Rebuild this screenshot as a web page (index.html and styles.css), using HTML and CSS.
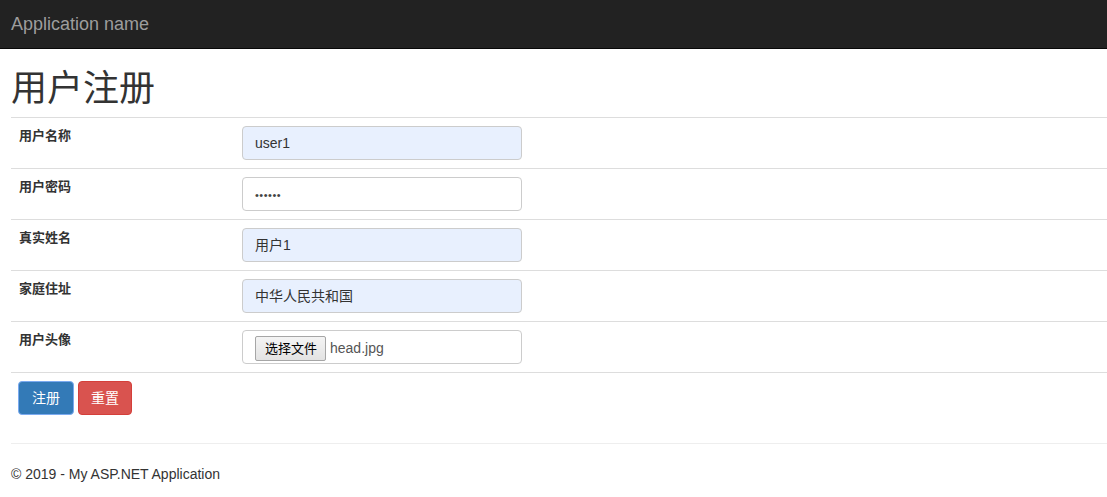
FILE: index.html
```html
<!DOCTYPE html>
<html lang="zh-CN">
<head>
<meta charset="utf-8">
<title>用户注册</title>
<link rel="stylesheet" href="styles.css">
</head>
<body>
<header class="navbar">
  <a class="brand" href="#">Application name</a>
</header>
<main class="content">
  <h1 class="title">用户注册</h1>
  <table class="form-table">
    <tr>
      <td class="label">用户名称</td>
      <td><div class="field autofill">user1</div></td>
    </tr>
    <tr>
      <td class="label">用户密码</td>
      <td><div class="field"><span class="dots">••••••</span></div></td>
    </tr>
    <tr>
      <td class="label">真实姓名</td>
      <td><div class="field autofill">用户1</div></td>
    </tr>
    <tr>
      <td class="label">家庭住址</td>
      <td><div class="field autofill">中华人民共和国</div></td>
    </tr>
    <tr>
      <td class="label">用户头像</td>
      <td><div class="field file"><span class="file-btn">选择文件</span><span class="file-name">head.jpg</span></div></td>
    </tr>
    <tr>
      <td colspan="2" class="actions">
        <button class="btn btn-primary">注册</button>
        <button class="btn btn-danger">重置</button>
      </td>
    </tr>
  </table>
  <hr class="rule">
  <footer class="footer">
    <p>© 2019 - My ASP.NET Application</p>
  </footer>
</main>
</body>
</html>
```

FILE: styles.css
```css
html, body {
  margin: 0;
  padding: 0;
  background: #fff;
}
body {
  font-family: "Liberation Sans", Arial, "Noto Sans CJK SC", sans-serif;
  font-size: 14px;
  line-height: 20px;
  color: #333;
}
.navbar {
  height: 48px;
  background: #222;
  border-bottom: 1px solid #080808;
  display: flex;
  align-items: center;
  padding-left: 11px;
}
.brand {
  font-size: 18px;
  line-height: 20px;
  color: #9d9d9d;
  text-decoration: none;
  margin-top: -1px;
}
.content {
  padding-left: 11px;
}
.title {
  margin: 20px 0 8px 0;
  font-size: 36px;
  line-height: 40px;
  font-weight: 400;
  color: #333;
  font-family: "Liberation Sans", "Noto Sans CJK SC", sans-serif;
}
.form-table {
  width: 100%;
  border-collapse: collapse;
  border-spacing: 0;
}
.form-table td {
  border-top: 1px solid #ddd;
  padding: 8px;
  vertical-align: top;
}
.form-table td.label {
  width: 207px;
  font-size: 13px;
  font-weight: bold;
  line-height: 20px;
  color: #333;
}
.field {
  box-sizing: border-box;
  width: 280px;
  height: 34px;
  border: 1px solid #ccc;
  border-radius: 4px;
  background: #fff;
  padding: 6px 12px;
  font-size: 14px;
  line-height: 20px;
  color: #333;
}
.field.autofill {
  background: #e8f0fe;
}
.dots {
  font-size: 11px;
  letter-spacing: 0.5px;
  color: #444;
}
.field.file {
  display: flex;
  align-items: center;
  padding: 4px 12px 2px 12px;
}
.file-btn {
  box-sizing: border-box;
  height: 25px;
  padding: 0 8px 0 9px;
  border: 1px solid #a6a6a6;
  border-radius: 2px;
  background: linear-gradient(#f4f4f4, #e3e3e3);
  font-size: 13px;
  line-height: 23px;
  color: #000;
}
.file-name {
  margin-left: 4px;
  color: #555;
  font-size: 14px;
}
.form-table td.actions {
  padding-left: 7px;
  padding-bottom: 8px;
}
.btn {
  box-sizing: border-box;
  height: 34px;
  padding: 6px 12px;
  border: 1px solid transparent;
  border-radius: 4px;
  font-family: "Liberation Sans", "Noto Sans CJK SC", sans-serif;
  font-size: 14px;
  line-height: 20px;
  color: #fff;
  cursor: pointer;
  margin: 0;
}
.btn-primary {
  background: #337ab7;
  border-color: #7aaaf0;
  width: 56px;
}
.btn-danger {
  background: #d9534f;
  border-color: #d43f3a;
  width: 54px;
}
.rule {
  margin: 20px 0;
  border: 0;
  border-top: 1px solid #eee;
}
.footer p {
  margin: 0;
  font-size: 14px;
  line-height: 20px;
  color: #333;
}
```
